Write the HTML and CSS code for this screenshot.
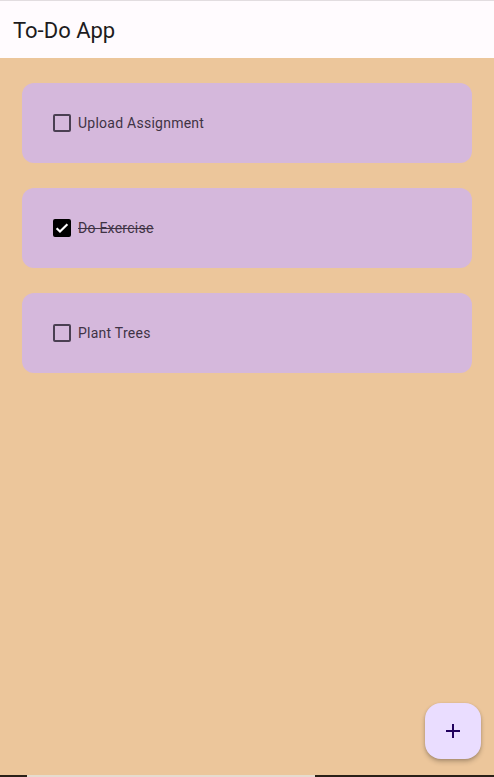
FILE: index.html
```html
<!DOCTYPE html>
<html>
<head>
<meta charset="utf-8">
<link rel="stylesheet" href="styles.css">
</head>
<body>
<div class="screen">
  <div class="topline"></div>
  <header class="appbar"><h1 class="title">To-Do App</h1></header>
  <main class="content">
    <div class="card">
      <span class="box"></span>
      <span class="label">Upload Assignment</span>
    </div>
    <div class="card">
      <span class="box checked"><svg viewBox="0 0 18 18" width="18" height="18"><path d="M3.6 9.2l3.4 3.3L14.4 5.3" fill="none" stroke="#fff" stroke-width="2.2"/></svg></span>
      <span class="label done">Do Exercise</span>
    </div>
    <div class="card">
      <span class="box"></span>
      <span class="label">Plant Trees</span>
    </div>
  </main>
  <button class="fab" aria-label="Add"><svg viewBox="0 0 24 24" width="24" height="24"><path d="M12 5v14M5 12h14" stroke="#21005d" stroke-width="2" fill="none"/></svg></button>
  <div class="navbar"><span class="navseg"></span></div>
</div>
</body>
</html>
```
FILE: styles.css
```css
* { box-sizing: border-box; }
html, body { margin: 0; padding: 0; }
body { font-family: Roboto, "Noto Sans", sans-serif; }
.screen {
  width: 494px; height: 777px;
  display: flex; flex-direction: column;
  background: #ecc69b;
  position: relative;
  overflow: hidden;
}
.topline { height: 2px; background: #fffbfe; border-top: 1px solid #e2dde0; flex: none; }
.appbar {
  height: 56px; flex: none;
  background: #fffbfe;
  display: flex; align-items: center;
  padding-left: 13px;
}
.title {
  margin: 0; font-weight: 400; font-size: 22px; color: #1d1b20;
  letter-spacing: 0;
}
.content {
  flex: 1;
  padding: 25px 22px 0 22px;
  display: flex; flex-direction: column; gap: 25px;
}
.card {
  height: 80px;
  background: #d5b8dc;
  border-radius: 12px;
  display: flex; align-items: center;
  padding-left: 31px;
}
.box {
  width: 18px; height: 18px;
  border: 2px solid #4a3f52;
  border-radius: 2px;
  display: flex; align-items: center; justify-content: center;
  flex: none;
}
.box.checked { background: #000; border-color: #000; }
.box.checked svg { flex: none; }
.label {
  margin-left: 7px;
  font-size: 14px;
  color: #3f3345;
  letter-spacing: 0.25px;
}
.label.done { text-decoration: line-through; }
.fab {
  position: absolute; right: 13px; bottom: 18px;
  width: 56px; height: 56px;
  border: none; border-radius: 16px;
  background: #eaddff;
  box-shadow: 0 3px 5px rgba(0,0,0,0.2), 0 1px 3px rgba(0,0,0,0.15);
  display: flex; align-items: center; justify-content: center;
  padding: 0;
}
.navbar { height: 2px; flex: none; background: #2a2018; position: relative; }
.navseg { position: absolute; left: 27px; width: 288px; top: 0; height: 2px; background: #e6dccf; }
```
